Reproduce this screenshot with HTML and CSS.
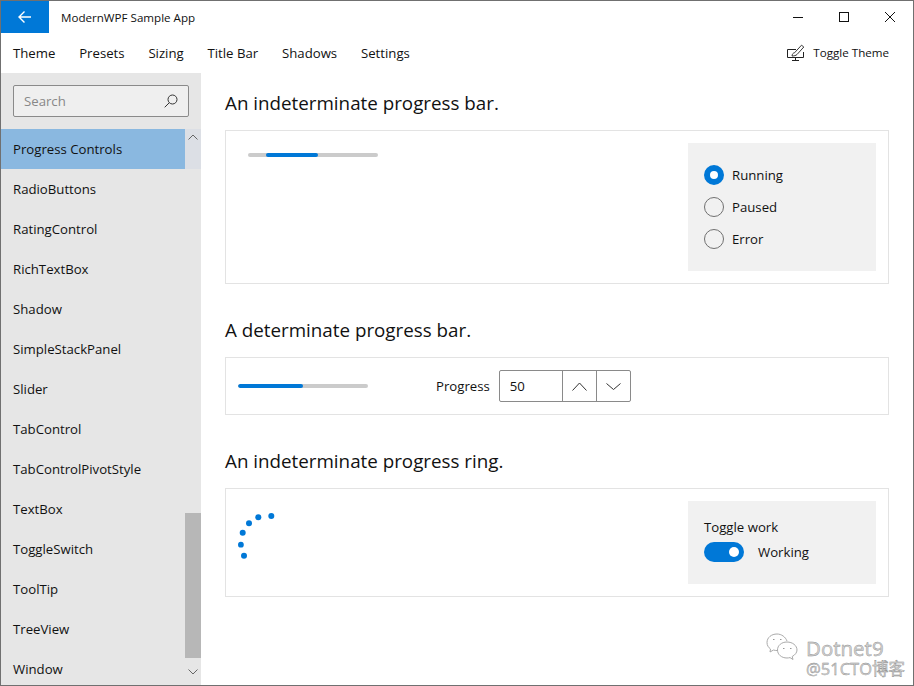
FILE: index.html
```html
<!DOCTYPE html>
<html lang="en">
<head>
  <meta charset="utf-8" />
  <title>ModernWPF Sample App</title>
  <link rel="stylesheet" href="styles.css">
</head>
<body>
  <div class="window">
    <header class="titlebar">
      <div class="back-btn">
        <svg width="16" height="16" viewBox="0 0 16 16"><path d="M14 8H2.500M7.500 2.500L2 8l5.500 5.500" fill="none" stroke="#fff" stroke-width="1.400"/></svg>
      </div>
      <div class="app-title">ModernWPF Sample App</div>
      <div class="caption-btns">
        <span class="caption-btn"><svg width="12" height="12" viewBox="0 0 12 12"><path d="M1 6.500h10" stroke="#111" fill="none"/></svg></span>
        <span class="caption-btn"><svg width="12" height="12" viewBox="0 0 12 12"><rect x="1.500" y="1.500" width="9" height="9" stroke="#111" fill="none"/></svg></span>
        <span class="caption-btn"><svg width="12" height="12" viewBox="0 0 12 12"><path d="M1 1l10 10M11 1L1 11" stroke="#111" fill="none"/></svg></span>
      </div>
    </header>

    <nav class="menubar">
      <span class="menu-item">Theme</span>
      <span class="menu-item">Presets</span>
      <span class="menu-item">Sizing</span>
      <span class="menu-item">Title Bar</span>
      <span class="menu-item">Shadows</span>
      <span class="menu-item">Settings</span>
      <div class="toggle-theme">
        <svg width="18" height="17" viewBox="0 0 18 17"><path d="M9 5.500H.5v8h16V8M5 16.500h7M8.500 13.500v3" fill="none" stroke="#222"/><path d="M5 12c.3-2 1-3 2.500-3.200L14.500 1.200 16.800 3 10 10.500C9 11.500 7 12 5 12z" fill="#fff" stroke="#222" stroke-width=".9"/></svg>
        <span>Toggle Theme</span>
      </div>
    </nav>

    <div class="body">
      <aside class="sidebar">
        <div class="search-wrap">
          <div class="search">
            <span>Search</span>
            <svg width="14" height="14" viewBox="0 0 14 14"><circle cx="8.500" cy="5.500" r="4.500" fill="none" stroke="#333"/><path d="M5.200 8.800L.7 13.300" stroke="#333" fill="none"/></svg>
          </div>
        </div>
        <div class="list-wrap">
          <ul class="list">
            <li class="selected">Progress Controls</li>
            <li>RadioButtons</li>
            <li>RatingControl</li>
            <li>RichTextBox</li>
            <li>Shadow</li>
            <li>SimpleStackPanel</li>
            <li>Slider</li>
            <li>TabControl</li>
            <li>TabControlPivotStyle</li>
            <li>TextBox</li>
            <li>ToggleSwitch</li>
            <li>ToolTip</li>
            <li>TreeView</li>
            <li>Window</li>
          </ul>
          <div class="scrollbar">
            <div class="scroll-top">
              <svg width="10" height="6" viewBox="0 0 10 6"><path d="M.5 5.500L5 1l4.500 4.500" fill="none" stroke="#666"/></svg>
            </div>
            <div class="scroll-track"><div class="scroll-thumb"></div></div>
            <div class="scroll-bottom">
              <svg width="10" height="6" viewBox="0 0 10 6"><path d="M.5 .5L5 5 9.500 .5" fill="none" stroke="#666"/></svg>
            </div>
          </div>
        </div>
      </aside>

      <main class="content">
        <h2>An indeterminate progress bar.</h2>
        <section class="card card-first">
          <div class="card-main pad-indet">
            <div class="bar bar-indet"><div class="bar-fill"></div></div>
          </div>
          <div class="options options-radio">
            <label class="radio checked"><span class="radio-dot"></span>Running</label>
            <label class="radio"><span class="radio-dot"></span>Paused</label>
            <label class="radio"><span class="radio-dot"></span>Error</label>
          </div>
        </section>

        <h2>A determinate progress bar.</h2>
        <section class="card card-det">
          <div class="bar bar-det"><div class="bar-fill"></div></div>
          <span class="spin-label">Progress</span>
          <div class="spinbox">
            <span class="spin-value">50</span>
            <span class="spin-btn"><svg width="15" height="9" viewBox="0 0 15 9"><path d="M.5 8.500L7.500 1l7 7.500" fill="none" stroke="#333"/></svg></span>
            <span class="spin-btn"><svg width="15" height="7" viewBox="0 0 15 7"><path d="M.5 .5L7.500 6.500 14.500 .5" fill="none" stroke="#333"/></svg></span>
          </div>
        </section>

        <h2>An indeterminate progress ring.</h2>
        <section class="card card-ring">
          <div class="card-main">
            <svg class="ring" width="40" height="60" viewBox="0 0 40 60">
              <circle cx="33.300" cy="15" r="3"/>
              <circle cx="20.300" cy="16.300" r="3"/>
              <circle cx="11" cy="22.300" r="3"/>
              <circle cx="4.700" cy="31.700" r="3"/>
              <circle cx="2.900" cy="43.700" r="2.900"/>
              <circle cx="6" cy="54.700" r="3"/>
            </svg>
          </div>
          <div class="options options-toggle">
            <div class="toggle-title">Toggle work</div>
            <div class="toggle-row">
              <span class="switch"><span class="switch-knob"></span></span>
              <span>Working</span>
            </div>
          </div>
        </section>
      </main>
    </div>

    <div class="watermark">
      <svg class="wm-icon" width="32" height="28" viewBox="0 0 32 28">
        <path d="M21 8C19.500 4 15.500 1 11 1 5.500 1 1 4.500 1 9.500c0 3 1.500 5 3.500 6.500L4 19l3.500-2c1 .3 2.500.6 3.700.6" fill="none" stroke="#aaa"/>
        <path d="M21 9c-5.500 0-9.500 3.500-9.500 8s4 8 9.500 8c1 0 2-.2 3-.4l3 1.900-.8-3c2.800-1.500 4.800-3.800 4.800-6.500 0-4.500-4.500-8-10-8z" fill="none" stroke="#aaa"/>
        <path d="M7 6.500h1.500M14 6.500h1.500M17 15.500h1.500M24 15.500h1.500" stroke="#999" fill="none"/>
      </svg>
      <div class="watermark-text">
        <div class="wm-name">Dotnet9</div>
        <div class="wm-site">@51CTO博客</div>
      </div>
    </div>
  </div>
</body>
</html>
```
FILE: styles.css
```css
/* Base */
html, body {
  margin: 0;
  height: 100%;
}

body {
  font-family: "Open Sans", "Noto Sans CJK SC", sans-serif;
  font-size: 13.2px;
  color: #111;
  background: #fff;
}

.window {
  position: relative;
  box-sizing: border-box;
  width: 914px;
  height: 686px;
  border: 1px solid #707070;
  display: flex;
  flex-direction: column;
  overflow: hidden;
}

/* Title bar */
.titlebar {
  display: flex;
  align-items: center;
  height: 32px;
  flex-shrink: 0;
}

.back-btn {
  width: 48px;
  height: 32px;
  background-color: #0078d7;
  display: flex;
  justify-content: center;
  align-items: center;
}

.app-title {
  margin-left: 12px;
  font-size: 11.6px;
}

.caption-btns {
  display: flex;
  margin-left: auto;
}

.caption-btn {
  width: 46px;
  height: 32px;
  display: flex;
  justify-content: center;
  align-items: center;
}

/* Menu */
.menubar {
  box-sizing: border-box;
  display: flex;
  align-items: center;
  height: 40px;
  flex-shrink: 0;
  padding: 0 0 1px 12px;
  gap: 23.8px;
}

.toggle-theme {
  display: flex;
  align-items: center;
  gap: 8px;
  margin-left: auto;
  margin-right: 24px;
  font-size: 11.6px;
}

.body {
  display: flex;
  flex: 1;
  min-height: 0;
}

/* Sidebar */
.sidebar {
  width: 200px;
  flex-shrink: 0;
  background-color: #e6e6e6;
  display: flex;
  flex-direction: column;
}

.search-wrap {
  padding: 12px 12px 12px;
}

.search {
  box-sizing: border-box;
  height: 32px;
  display: flex;
  align-items: center;
  justify-content: space-between;
  padding: 0 10px;
  background-color: #efefef;
  border: 1px solid #8a8a8a;
  border-radius: 2px;
  color: #888;
}

.list-wrap {
  display: flex;
  flex: 1;
  min-height: 0;
}

.list {
  flex: 1;
  list-style: none;
  margin: 0;
  padding: 0;
}

.list li {
  height: 40px;
  line-height: 40px;
  padding-left: 12px;
  white-space: nowrap;
}

.list li.selected {
  background-color: #8ab8e0;
}

.scrollbar {
  width: 16px;
  display: flex;
  flex-direction: column;
}

.scroll-top, .scroll-bottom {
  display: flex;
  justify-content: center;
  align-items: center;
}

.scroll-top {
  background-color: #dcdfe5;
  height: 40px;
  align-items: flex-start;
  padding-top: 5px;
  box-sizing: border-box;
}

.scroll-bottom {
  height: 27px;
}

.scroll-track {
  flex: 1;
  display: flex;
  align-items: flex-end;
}

.scroll-thumb {
  width: 16px;
  height: 145px;
  background-color: #b7b7b7;
}

/* Content */
.content {
  flex: 1;
  padding: 0 24px 0 24px;
  min-width: 0;
}

h2 {
  margin: 0;
  font-weight: 400;
  font-size: 18.8px;
  line-height: 26px;
  padding: 17px 0 14px;
}

.card + h2 {
  padding-top: 33px;
}

.card {
  box-sizing: border-box;
  display: flex;
  border: 1px solid #e3e3e3;
}

.card-first {
  height: 154px;
  padding: 12px;
  justify-content: space-between;
}

.card-main {
  flex: 1;
}

.pad-indet {
  padding: 10px;
}

.options {
  box-sizing: border-box;
  width: 188px;
  background-color: #f1f1f1;
}

.options-radio {
  padding: 16px;
}

.bar {
  height: 4px;
  border-radius: 2px;
  background-color: #cbcbcb;
  width: 130px;
  overflow: hidden;
}

.bar-fill {
  height: 100%;
  border-radius: 2px;
  background-color: #0078d7;
}

.bar-indet .bar-fill {
  width: 52px;
  margin-left: 18px;
}

.bar-det .bar-fill {
  width: 65px;
}

/* Radio buttons */
.radio {
  display: flex;
  align-items: center;
  height: 32px;
  gap: 8px;
}

.radio-dot {
  box-sizing: border-box;
  width: 20px;
  height: 20px;
  border: 1px solid #707070;
  border-radius: 50%;
}

.radio.checked .radio-dot {
  border: 6px solid #0078d7;
  background-color: #fff;
}

/* Determinate row */
.card-det {
  height: 58px;
  align-items: center;
  padding-left: 12px;
}

.spin-label {
  margin-left: 68px;
}

.spinbox {
  box-sizing: border-box;
  display: flex;
  width: 132px;
  height: 32px;
  margin-left: 9px;
  border: 1px solid #8a8a8a;
  border-radius: 2px;
}

.spin-value {
  flex: 1;
  line-height: 30px;
  padding-left: 10px;
}

.spin-btn {
  width: 33px;
  display: flex;
  justify-content: center;
  align-items: center;
  border-left: 1px solid #8a8a8a;
}

/* Ring row */
.card-ring {
  height: 109px;
  padding: 12px;
}

.ring {
  display: block;
  fill: #0078d7;
}

.options-toggle {
  height: 83px;
  padding: 16px;
}

.toggle-title {
  line-height: 20px;
  margin-bottom: 5px;
}

.toggle-row {
  display: flex;
  align-items: center;
  gap: 14px;
}

.switch {
  display: flex;
  align-items: center;
  justify-content: flex-end;
  box-sizing: border-box;
  width: 40px;
  height: 20px;
  padding-right: 5px;
  border-radius: 10px;
  background-color: #0078d7;
}

.switch-knob {
  width: 10px;
  height: 10px;
  border-radius: 50%;
  background-color: #fff;
}

/* Watermark */
.watermark {
  position: absolute;
  right: 8px;
  bottom: 7px;
  display: flex;
  gap: 7px;
  color: #d4d4d4;
  -webkit-text-stroke: 0.4px #8c8c8c;
}

.wm-icon {
  margin: -5px 1px 0 -1px;
}

.wm-name {
  font-size: 20.5px;
  line-height: 21px;
}

.wm-site {
  font-size: 16.5px;
  line-height: 19px;
}
```
